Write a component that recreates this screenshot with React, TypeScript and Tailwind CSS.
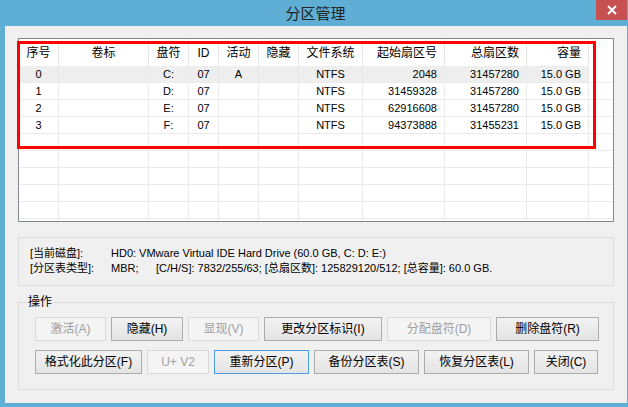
import React from 'react';

type Col = { title: string; w: string; align: string };

const cols: Col[] = [
  { title: '序号', w: 'w-[40px]', align: 'justify-center' },
  { title: '卷标', w: 'w-[90px]', align: 'justify-center' },
  { title: '盘符', w: 'w-[40px]', align: 'justify-center' },
  { title: 'ID', w: 'w-[30px]', align: 'justify-center' },
  { title: '活动', w: 'w-[40px]', align: 'justify-center' },
  { title: '隐藏', w: 'w-[40px]', align: 'justify-center' },
  { title: '文件系统', w: 'w-[64px]', align: 'justify-center' },
  { title: '起始扇区号', w: 'w-[82px]', align: 'justify-end pr-[7px]' },
  { title: '总扇区数', w: 'w-[82px]', align: 'justify-end pr-[7px]' },
  { title: '容量', w: 'w-[62px]', align: 'justify-end pr-[7px]' },
];

const empty = ['', '', '', '', '', '', '', '', '', ''];

const rows: string[][] = [
  ['0', '', 'C:', '07', 'A', '', 'NTFS', '2048', '31457280', '15.0 GB'],
  ['1', '', 'D:', '07', '', '', 'NTFS', '31459328', '31457280', '15.0 GB'],
  ['2', '', 'E:', '07', '', '', 'NTFS', '62916608', '31457280', '15.0 GB'],
  ['3', '', 'F:', '07', '', '', 'NTFS', '94373888', '31455231', '15.0 GB'],
  empty, empty, empty, empty, empty, empty,
];

type BtnProps = { label: string; w: string; disabled?: boolean; focus?: boolean };

const Btn = ({ label, w, disabled, focus }: BtnProps) => {
  let look = 'border-[#acacac] bg-linear-to-b from-[#f2f2f2] to-[#e4e4e4] text-black';
  if (disabled) look = 'border-[#d9d9d9] bg-[#f4f4f4] text-[#a0a0a0]';
  if (focus) look = 'border-[#4a9fe6] bg-linear-to-b from-[#f2f2f2] to-[#e4e4e4] text-black';
  return (
    <div className={`${w} h-[24px] border ${look} flex items-center justify-center text-[12px] leading-none`}>
      {label}
    </div>
  );
};

export default function App() {
  return (
    <div className="w-[628px] h-[407px] bg-[#5eaed6] flex flex-col [font-family:'Liberation_Sans','Noto_Sans_CJK_SC',sans-serif] select-none">
      {/* 标题栏 */}
      <div className="h-[26px] grid grid-cols-[1fr_auto_1fr] pr-[1px]">
        <div />
        <div className="flex items-center pl-[4px] text-[15px] text-[#222] [font-family:'Noto_Sans_CJK_SC',sans-serif]">
          分区管理
        </div>
        <div className="flex justify-end items-start">
          <div className="w-[31px] h-[20px] bg-[#c75050] flex items-center justify-center">
            <svg width="10" height="10" viewBox="0 0 10 10">
              <path d="M1 1 L9 9 M9 1 L1 9" stroke="white" strokeWidth="2" />
            </svg>
          </div>
        </div>
      </div>

      {/* 窗体内容 */}
      <div className="flex-1 ml-[5px] mr-[1px] mb-[4px] bg-[#f0f0f0] px-[13px] pt-[12px] flex flex-col">
        {/* 分区列表 */}
        <div className="relative h-[184px] border border-[#828790] bg-white">
          <div className="h-full overflow-hidden">
            <div className="flex h-[27px]">
              {cols.map((c) => (
                <div
                  key={c.title}
                  className={`${c.w} shrink-0 h-full border-r border-[#e5e5e5] flex items-center ${c.align} text-[12px] text-black`}
                >
                  {c.title}
                </div>
              ))}
              <div className="flex-1" />
            </div>
            {rows.map((r, i) => (
              <div key={i} className="flex h-[17px]">
                {r.map((v, j) => (
                  <div
                    key={j}
                    className={`${cols[j].w} shrink-0 h-full border-r border-b border-[#ebebeb] flex items-center ${cols[j].align} text-[11px] text-black ${i === 0 ? 'bg-[#eeeeee]' : ''}`}
                  >
                    {v}
                  </div>
                ))}
                <div className="flex-1 h-full border-b border-[#ebebeb]" />
              </div>
            ))}
          </div>
          <div className="absolute left-[-2px] top-[2px] w-[579px] h-[108px] border-[3px] border-[#ff0000] pointer-events-none" />
        </div>

        {/* 磁盘信息 */}
        <div className="mt-[15px] h-[49px] border border-[#dcdcdc] pl-[11px] pt-[8px] text-[11px] leading-[15px] text-black whitespace-pre">
          <div className="flex">
            <span className="w-[81px]">[当前磁盘]:</span>
            <span>HD0: VMware Virtual IDE Hard Drive (60.0 GB, C: D: E:)</span>
          </div>
          <div className="flex">
            <span className="w-[81px]">[分区表类型]:</span>
            <span className="w-[45px]">MBR;</span>
            <span>[C/H/S]: 7832/255/63; [总扇区数]: 125829120/512; [总容量]: 60.0 GB.</span>
          </div>
        </div>

        {/* 操作 */}
        <div className="relative mt-[16px] h-[88px] border border-[#dcdcdc] pt-[14px] pl-[16px] flex flex-col gap-[9px]">
          <span className="absolute left-[8px] top-[-9px] px-[1px] bg-[#f0f0f0] text-[12px] leading-[16px] text-black">
            操作
          </span>
          <div className="flex gap-[5px]">
            <Btn label="激活(A)" w="w-[71px]" disabled />
            <Btn label="隐藏(H)" w="w-[72px]" />
            <Btn label="显现(V)" w="w-[71px]" disabled />
            <Btn label="更改分区标识(I)" w="w-[118px]" />
            <Btn label="分配盘符(D)" w="w-[104px]" disabled />
            <Btn label="删除盘符(R)" w="w-[103px]" />
          </div>
          <div className="flex gap-[5px]">
            <Btn label="格式化此分区(F)" w="w-[107px]" />
            <Btn label="U+ V2" w="w-[62px]" disabled />
            <Btn label="重新分区(P)" w="w-[95px]" focus />
            <Btn label="备份分区表(S)" w="w-[105px]" />
            <Btn label="恢复分区表(L)" w="w-[105px]" />
            <Btn label="关闭(C)" w="w-[64px]" />
          </div>
        </div>
      </div>
    </div>
  );
}
